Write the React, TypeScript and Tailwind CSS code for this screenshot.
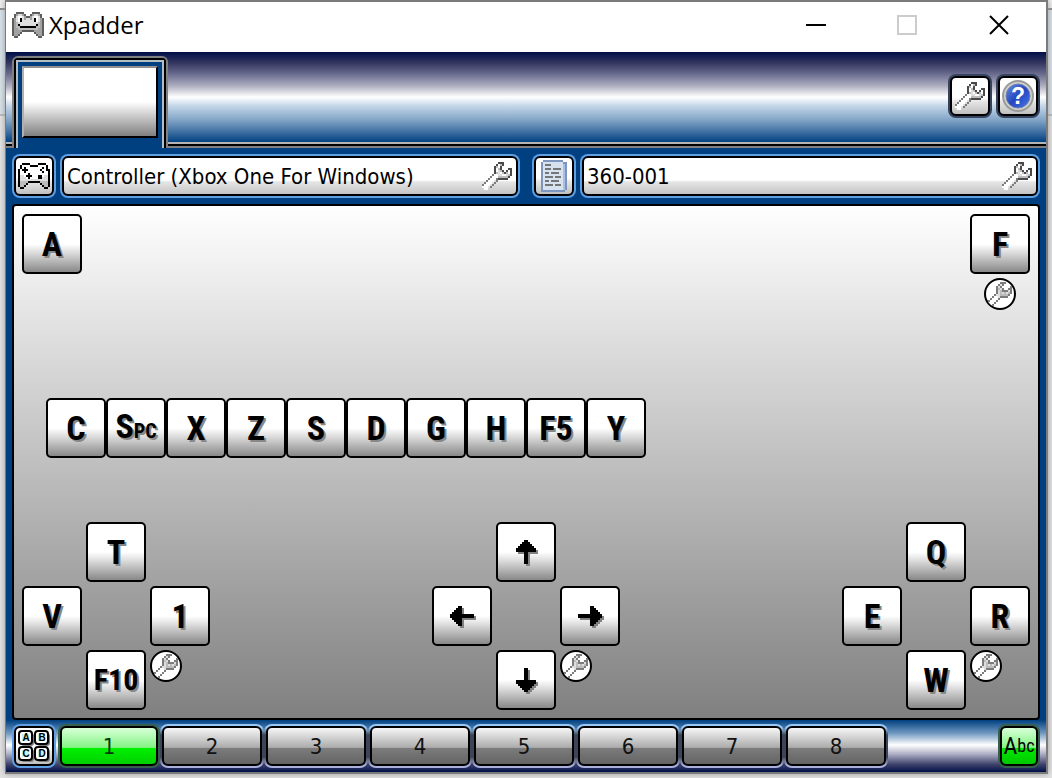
import type { ReactNode } from "react";

const palette: Record<string, string> = {
  K: "#000000",
  D: "#4a4a4a",
  M: "#7c7c7c",
  d: "#5e5e5e",
  m: "#a2a2a2",
  g: "#bcbcbc",
  l: "#dedede",
  w: "#ffffff",
};

const wrenchRows = [
  "........DDD....",
  ".......DwgD....",
  "......DgwD.....",
  "......DwgD...DD",
  "......DwlgD.DwD",
  "......DglwgDgwD",
  ".....MwwllwwlgD",
  "....MwwwgggggD.",
  "...MwwwMDDDDD..",
  "..MwwwlM.......",
  ".MwwwlM........",
  "MwwwlM.........",
  "wwwlM..........",
  ".ww............",
];

const roundWrenchRows = [
  ".......MMM....",
  "......MlM.....",
  ".....MlM....M.",
  ".....MglM..MM.",
  ".....MlgMMMlM.",
  ".....MlglglgM.",
  "....MllggggM..",
  "...MwwlMMMM...",
  "..MwwwM.......",
  ".MwwwM........",
  "MwwwM.........",
  "wwwM..........",
];

const padRows = [
  "..KKKK....KKKK..",
  ".KwwwwKKKKwwwwK.",
  ".KwKwwwwwwwwKwK.",
  "KwKKKwwwwwwKwwKK",
  "KwwKwwwwwwwwKwwK",
  "KwwwwKwwwwwwwwwK",
  "KllwKKKwwwKKwllK",
  "KlllwKwwwwKKlllK",
  "KllllllllllllllK",
  "KggggKKKKKKggggK",
  "KgggK......KgggK",
  "KggK........KggK",
  ".KK..........KK.",
];

const logoRows = [
  "..dddd....dddd..",
  ".dmllmd..dmllmd.",
  ".dlwwlmddmlwwld.",
  "dmlwKlmllmlKwlmd",
  "dmlwKllllllKwlmd",
  "dmgllllllllllgmd",
  "dmgKllllllllKgmd",
  "dmggKKKKKKKKggmd",
  "dmmggggggggggmmd",
  "dmmmmddddddmmmmd",
  "dmmmd......dmmmd",
  "dmmd........dmmd",
  ".dd..........dd.",
];

function PixelArt({ rows, className }: { rows: string[]; className: string }) {
  return (
    <svg
      viewBox={`0 0 ${rows[0].length} ${rows.length}`}
      className={className}
      shapeRendering="crispEdges"
      aria-hidden="true"
    >
      {rows.flatMap((row, y) =>
        row.split("").map((c, x) =>
          c === "." ? null : <rect key={`${x}-${y}`} x={x} y={y} width={1} height={1} fill={palette[c]} />
        )
      )}
    </svg>
  );
}

const Wrench = () => <PixelArt rows={wrenchRows} className="h-7 w-[30px]" />;

const arrowTurn = { up: "", right: "rotate-90", down: "rotate-180", left: "-rotate-90" };
type Direction = keyof typeof arrowTurn;

const arrowShape = "M10 0h4v2h2v2h2v2h2v2h2v4h-8v12h-4V12H2V8h2V6h2V4h2V2h2z";

function Arrow({ to }: { to: Direction }) {
  return (
    <span className="drop-shadow-[2px_2px_0_#808080]">
      <svg viewBox="0 0 24 24" className={`size-6 ${arrowTurn[to]}`} shapeRendering="crispEdges" aria-hidden="true">
        <path d={arrowShape} />
      </svg>
    </span>
  );
}

function Key({ children, label, small = false }: { children: ReactNode; label?: string; small?: boolean }) {
  return (
    <button
      type="button"
      aria-label={label}
      className={`flex size-[60px] items-center justify-center rounded-[5px] border-2 border-black bg-[linear-gradient(#fff_50%,#e4e4e4_62%,#888_100%)] font-['Liberation_Sans_Narrow','Roboto_Condensed','DejaVu_Sans_Condensed',sans-serif] leading-8 font-bold text-black [text-shadow:2px_2px_0_#888] ${small ? "text-[30px]" : "text-[34px]"}`}
    >
      {children}
    </button>
  );
}

function StickSettings({ label }: { label: string }) {
  return (
    <button
      type="button"
      aria-label={label}
      className="flex size-8 items-center justify-center overflow-hidden rounded-full border-2 border-black bg-white"
    >
      <PixelArt rows={roundWrenchRows} className="h-6 w-7" />
    </button>
  );
}

type ClusterProps = { name: string; up: ReactNode; left: ReactNode; right: ReactNode; down: ReactNode };

function Cluster({ name, up, left, right, down }: ClusterProps) {
  return (
    <div className="grid grid-cols-[60px_60px_60px] gap-1">
      <div className="col-start-2">{up}</div>
      <div className="col-start-1">{left}</div>
      <div className="col-start-3">{right}</div>
      <div className="col-start-2">{down}</div>
      <StickSettings label={`${name} settings`} />
    </div>
  );
}

function ToolButton({ label, children, dark = false }: { label: string; children: ReactNode; dark?: boolean }) {
  return (
    <button
      type="button"
      aria-label={label}
      className={`size-11 shrink-0 rounded-lg p-0.5 ${dark ? "bg-[#35435f]" : "bg-[#5f9fe3]"}`}
    >
      <span className="flex size-10 items-center justify-center rounded-md border-2 border-black bg-[linear-gradient(#fff_55%,#e6e6e6_65%,#c0c0c0)]">
        {children}
      </span>
    </button>
  );
}

function Field({ label, value }: { label: string; value: string }) {
  return (
    <div className="h-11 min-w-0 flex-1 rounded-lg bg-[#5f9fe3] p-0.5">
      <div className="flex h-10 items-center rounded-md border-2 border-black bg-[linear-gradient(#fff_62%,#e6e6e6_66%,#c4c4c4)] pr-1 pl-[3px]">
        <input
          aria-label={label}
          readOnly
          value={value}
          className="min-w-0 flex-1 bg-transparent pt-0.5 font-['DejaVu_Sans_Condensed','DejaVu_Sans',sans-serif] text-[22px] leading-7 text-black outline-none"
        />
        <button type="button" aria-label={`${label} settings`}>
          <Wrench />
        </button>
      </div>
    </div>
  );
}

function PageIcon() {
  return (
    <svg viewBox="0 0 26 32" className="h-8 w-[26px]" shapeRendering="crispEdges" aria-hidden="true">
      <path d="M2 0h20v2h4v28h-2v2H0V2h2z" fill="#7d96bf" />
      <path d="M2 2h20v28H2z" fill="#d6e2f0" />
      <path d="M22 4h2v26h-2z" fill="#a9c0e2" />
      <path
        d="M4 5h6M4 9h6m2 0h8M4 13h4m2 0h8M4 17h8m2 0h6M4 21h4m2 0h8M4 25h8m2 0h6"
        stroke="#757575"
        strokeWidth="2"
      />
    </svg>
  );
}

function HelpIcon() {
  return (
    <svg viewBox="0 0 32 32" className="size-8" aria-hidden="true">
      <defs>
        <linearGradient id="help-ball" x1="0" y1="0" x2="1" y2="1">
          <stop offset="0" stopColor="#6a8fe0" />
          <stop offset="0.5" stopColor="#2346c0" />
          <stop offset="1" stopColor="#4a78e8" />
        </linearGradient>
      </defs>
      <circle cx="16" cy="16" r="15" fill="#d0d0c8" stroke="#9a9a9a" strokeWidth="2" />
      <circle cx="16" cy="16" r="12" fill="url(#help-ball)" stroke="#6b80b8" strokeWidth="1" />
      <text
        x="16"
        y="24"
        textAnchor="middle"
        fontFamily="'Liberation Sans', sans-serif"
        fontWeight="700"
        fontSize="23"
        fill="#fff"
      >
        ?
      </text>
    </svg>
  );
}

function LettersIcon() {
  const cells: [string, number, number][] = [
    ["A", 0, 0],
    ["B", 16, 0],
    ["C", 0, 16],
    ["D", 16, 16],
  ];
  return (
    <svg viewBox="0 0 32 32" className="size-8" aria-hidden="true">
      {cells.map(([letter, x, y]) => (
        <g key={letter}>
          <rect x={x + 3} y={y + 3} width="13" height="13" rx="3" fill="#808080" />
          <rect x={x + 1} y={y + 1} width="13" height="13" rx="3" fill="#fff" stroke="#000" strokeWidth="2" />
          <rect x={x + 4} y={y + 4} width="7" height="7" fill="#c4f4f8" />
          <text
            x={x + 8}
            y={y + 11}
            textAnchor="middle"
            fontFamily="'Liberation Sans', sans-serif"
            fontWeight="700"
            fontSize="10"
          >
            {letter}
          </text>
        </g>
      ))}
    </svg>
  );
}

function ProfileTab({ n, active }: { n: number; active: boolean }) {
  return (
    <button
      type="button"
      aria-pressed={active}
      className={`h-11 rounded-lg p-0.5 font-['DejaVu_Sans_Condensed','DejaVu_Sans',sans-serif] text-[22px] leading-7 ${
        active
          ? "w-[102px] bg-[#35604d] text-[#063806]"
          : "w-[104px] bg-[linear-gradient(#98c8f8,#98c8f8_8%,#3c4458_25%,#3c4458_75%,#aab0dc_94%)] text-[#111]"
      }`}
    >
      <span
        className={`flex h-10 items-center justify-center rounded-md border-2 border-black pt-0.5 ${
          active
            ? "bg-[linear-gradient(#d8ffd8,#84f484_54%,#00f000_56%,#00d000)]"
            : "bg-[linear-gradient(#f6f6f6,#acacac_54%,#7c7c7c_56%,#646464)]"
        }`}
      >
        {n}
      </span>
    </button>
  );
}

const rowKeys = ["C", "Spc", "X", "Z", "S", "D", "G", "H", "F5", "Y"];
const profiles = [1, 2, 3, 4, 5, 6, 7, 8];

export default function App() {
  return (
    <div className="min-h-screen bg-[linear-gradient(#eee_8px,#888_8px,#888_10px,#d6e1e9_10px,#d6e1e9_114px,#b8b8b8_114px,#b8b8b8_116px,#e2e2e2_116px)] pr-1 pb-1 pl-[5px]">
      <main className="border-t-2 border-r-2 border-b-2 border-l border-[#7b7b7b] bg-[#004080] shadow-[0_0_6px_#999]">
        <header className="flex h-[50px] items-center bg-white pb-1 pl-1.5">
          <PixelArt rows={logoRows} className="h-[26px] w-8" />
          <h1 className="ml-[5px] flex-1 font-['Open_Sans','Noto_Sans',sans-serif] text-2xl text-black">Xpadder</h1>
          <div className="flex items-center">
            <button type="button" aria-label="Minimize" className="flex h-11 w-[91px] items-center justify-center">
              <svg viewBox="0 0 20 20" className="size-5" shapeRendering="crispEdges">
                <path d="M0 10h20" stroke="#000" strokeWidth="2" />
              </svg>
            </button>
            <button type="button" aria-label="Maximize" className="flex h-11 w-[91px] items-center justify-center">
              <svg viewBox="0 0 20 20" className="size-5" shapeRendering="crispEdges">
                <path d="M1 1h18v18H1z" stroke="#ccc" strokeWidth="2" fill="none" />
              </svg>
            </button>
            <button type="button" aria-label="Close" className="flex h-11 w-[94px] items-center justify-center">
              <svg viewBox="0 0 20 20" className="size-5">
                <path d="M1 1l18 18M19 1L1 19" stroke="#000" strokeWidth="2" />
              </svg>
            </button>
          </div>
        </header>

        <div className="flex h-[90px] items-start justify-between bg-[linear-gradient(#000f48,#33365f_12%,#6c6e90_25%,#b0b0c2_38%,#fff_50%,#c4d6e8_60%,#7fa3c5_76%,#2e6299_92%,#004080)] pr-1.5 pl-1.5">
          <div className="relative z-10 mt-1 h-[92px] w-[156px] rounded-t-md border-2 border-b-0 border-[#808080]">
            <div className="h-full rounded-t border-2 border-b-0 border-black">
              <div className="h-full border-2 border-b-0 border-[#b4bcc4] bg-[#004080] px-1 pt-1">
                <button
                  type="button"
                  aria-label="Controller tab 1"
                  className="block h-[72px] w-full border-2 border-t-[#909090] border-r-black border-b-black border-l-[#b0b0b0] bg-[linear-gradient(#fff_50%,#e0e0e0_62%,#808080)]"
                />
              </div>
            </div>
          </div>
          <div className="mt-[22px] flex gap-1">
            <ToolButton label="Options" dark>
              <Wrench />
            </ToolButton>
            <ToolButton label="Help" dark>
              <HelpIcon />
            </ToolButton>
          </div>
        </div>
        <div className="h-1.5 border-t-2 border-b-2 border-t-[#b4b4b4] border-b-[#808080] bg-black" />

        <div className="flex gap-3 p-1.5">
          <div className="flex min-w-0 flex-1 gap-1">
            <ToolButton label="Controller">
              <PixelArt rows={padRows} className="h-[26px] w-8" />
            </ToolButton>
            <Field label="Controller name" value="Controller (Xbox One For Windows)" />
          </div>
          <div className="flex min-w-0 flex-1 gap-1">
            <ToolButton label="Profile">
              <PageIcon />
            </ToolButton>
            <Field label="Profile name" value="360-001" />
          </div>
        </div>

        <section className="mx-1.5 rounded-sm border-2 border-black bg-[linear-gradient(#fff,#808080)] p-2">
          <div className="flex items-start justify-between">
            <Key>A</Key>
            <div className="flex flex-col items-center gap-1">
              <Key>F</Key>
              <StickSettings label="Trigger settings" />
            </div>
          </div>
          <div className="mt-[88px] ml-6 flex">
            {rowKeys.map((k) => (
              <Key key={k}>
                {k === "Spc" ? (
                  <span>
                    S<span className="text-xl leading-8 uppercase">pc</span>
                  </span>
                ) : (
                  k
                )}
              </Key>
            ))}
          </div>
          <div className="mt-16 flex justify-between">
            <Cluster
              name="Left stick"
              up={<Key>T</Key>}
              left={<Key>V</Key>}
              right={<Key>1</Key>}
              down={<Key small>F10</Key>}
            />
            <Cluster
              name="D-pad"
              up={<Key label="Up"><Arrow to="up" /></Key>}
              left={<Key label="Left"><Arrow to="left" /></Key>}
              right={<Key label="Right"><Arrow to="right" /></Key>}
              down={<Key label="Down"><Arrow to="down" /></Key>}
            />
            <Cluster name="Right stick" up={<Key>Q</Key>} left={<Key>E</Key>} right={<Key>R</Key>} down={<Key>W</Key>} />
          </div>
        </section>

        <footer className="flex h-[52px] items-center bg-[linear-gradient(#004080,#6f97bf_25%,#fff_48%,#b0b0c8_65%,#40446c_85%,#000f48)] px-1.5">
          <ToolButton label="Sets">
            <LettersIcon />
          </ToolButton>
          <div className="ml-0.5 flex flex-1">
            {profiles.map((n) => (
              <ProfileTab key={n} n={n} active={n === 1} />
            ))}
          </div>
          <button type="button" className="h-11 rounded-lg bg-[#35604d] p-0.5">
            <span className="flex h-10 w-[38px] items-center justify-center rounded-md border-2 border-black bg-[linear-gradient(#d8ffd8,#84f484_54%,#00e800_56%,#00c800)] font-['Liberation_Sans_Narrow','Roboto_Condensed','DejaVu_Sans_Condensed',sans-serif] text-2xl leading-7 text-black">
              A<span className="text-lg leading-7">bc</span>
            </span>
          </button>
        </footer>
      </main>
    </div>
  );
}
